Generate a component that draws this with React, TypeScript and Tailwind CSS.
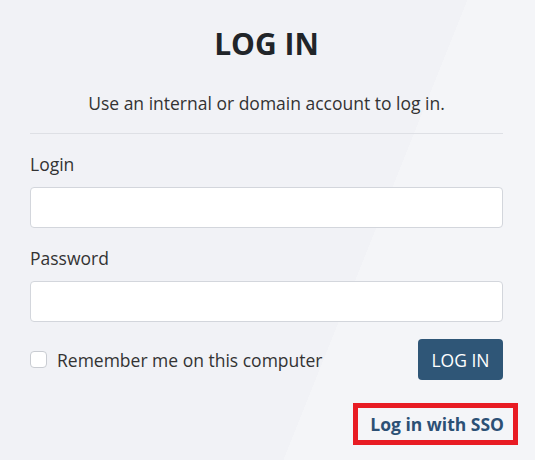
import React from "react";

export default function App() {
  return (
    <div className="w-[535px] h-[460px] overflow-hidden bg-[linear-gradient(111.8deg,#f1f2f6_65%,#f4f5f8_65%)] font-['Open_Sans',sans-serif] pl-[30px] pr-[32px] pt-[26px] text-[#333]">
      <h1 className="text-center text-[30px] leading-[36px] font-bold text-[#212529]">LOG IN</h1>
      <p className="mt-[29px] text-center text-[17.5px] leading-[24px] text-[#333]">
        Use an internal or domain account to log in.
      </p>
      <div className="mt-[18px] h-px bg-[#dee0e5]" />
      <label className="block mt-[18px] text-[17.5px] leading-[24px]">Login</label>
      <input
        type="text"
        className="mt-[11px] block w-full h-[41px] rounded border border-[#d3d6dc] bg-white px-3 outline-none"
      />
      <label className="block mt-[18px] text-[17.5px] leading-[24px]">Password</label>
      <input
        type="password"
        className="mt-[11px] block w-full h-[41px] rounded border border-[#d3d6dc] bg-white px-3 outline-none"
      />
      <div className="mt-[17px] flex items-center justify-between">
        <label className="flex items-center gap-[10px] text-[17.5px] leading-[24px]">
          <span className="block w-[17px] h-[17px] rounded-[4px] border border-[#c9ccd2] bg-white" />
          Remember me on this computer
        </label>
        <button className="h-[41px] w-[85px] rounded-[4px] bg-[#2f5677] text-white text-[17.5px] leading-[24px]">
          LOG IN
        </button>
      </div>
      <div className="mt-[23px] flex justify-end -mr-[15px]">
        <div className="h-[42px] border-[5px] border-[#e81c24] pl-[12px] pr-[9px] flex items-center font-bold text-[17.5px] text-[#2c5075]">
          Log in with SSO
        </div>
      </div>
    </div>
  );
}
